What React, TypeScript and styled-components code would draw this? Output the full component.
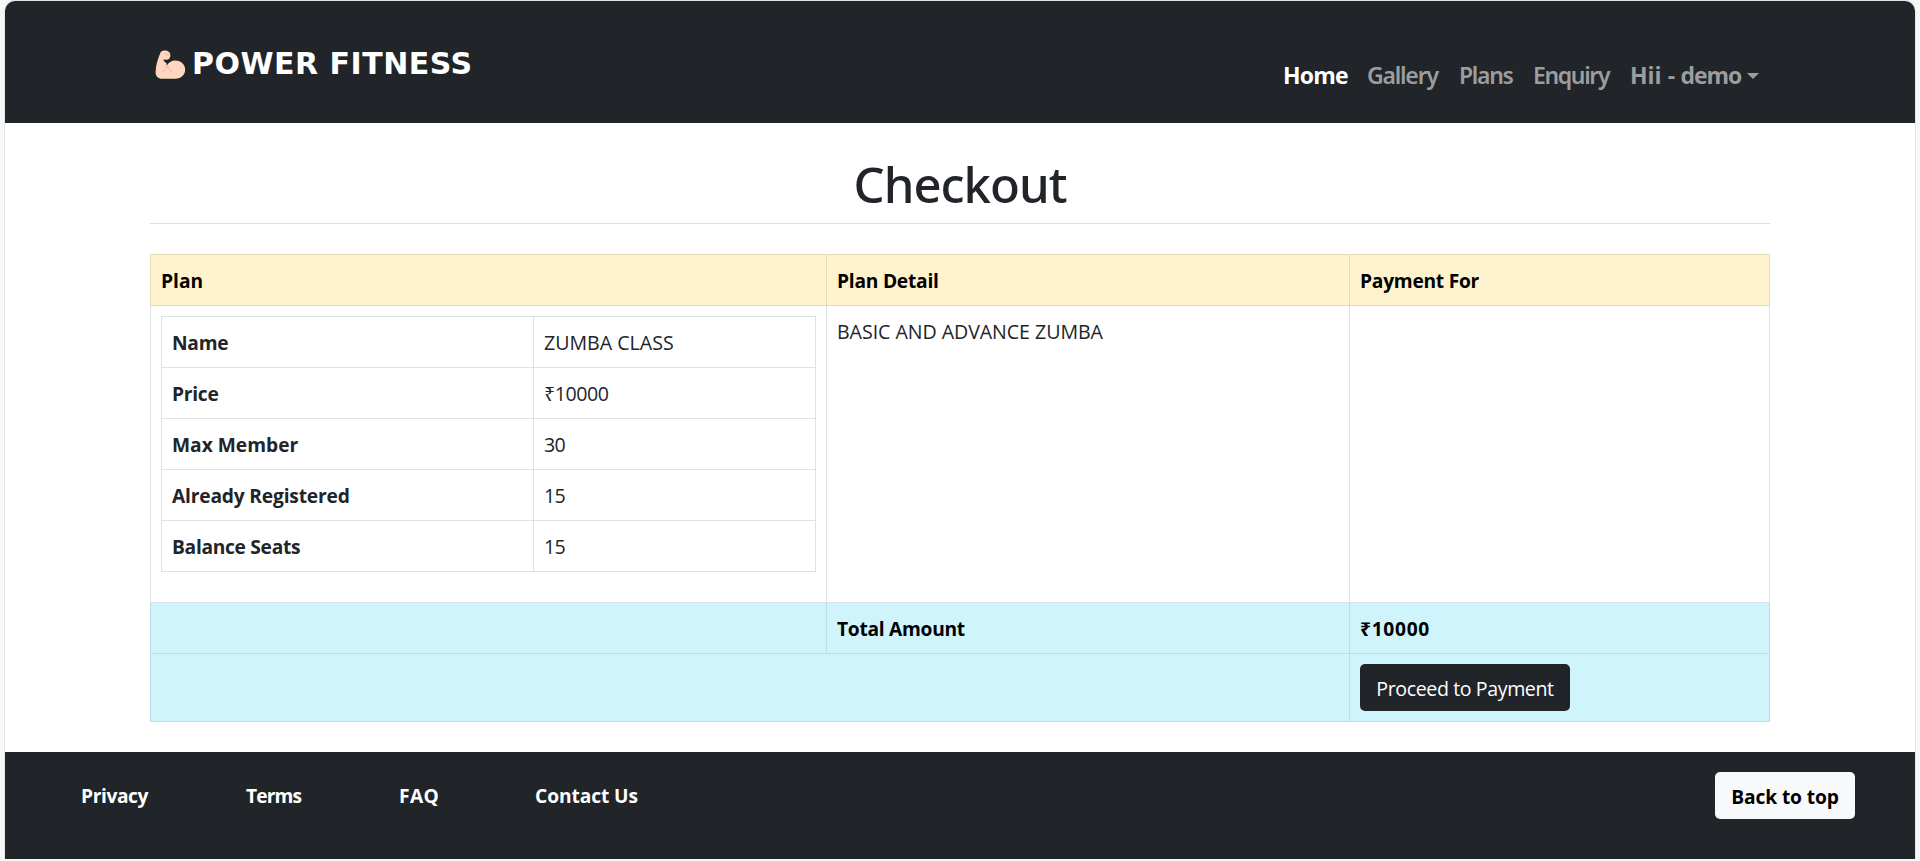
import React from 'react';
import styled, { createGlobalStyle, css } from 'styled-components';

const GlobalStyle = createGlobalStyle`
  * { box-sizing: border-box; }
  html, body { height: 100%; }
  body {
    margin: 0;
    background: #f7f7f8;
    color: #212529;
    font: 400 19.6px/30px "Open Sans", "Noto Sans", sans-serif;
    overflow: hidden;
  }
`;

const Page = styled.div`
  width: 1912px;
  height: 859px;
  margin: 0 4px;
  border: 1px solid #e4e5e6;
  border-bottom: 0;
  border-radius: 11px 11px 0 0;
  background: #fff;
  overflow: hidden;
  display: flex;
  flex-direction: column;
`;

const Header = styled.header`
  height: 122px;
  flex: none;
  background: #212529;
  padding: 0 145px 0 150px;
  display: flex;
  justify-content: space-between;
`;

const Brand = styled.a`
  display: flex;
  align-items: flex-start;
  gap: 6px;
  padding-top: 49px;
  color: #fff;
  svg { display: block; }
`;

const BrandName = styled.span`
  font: 700 30px/30px "DejaVu Sans", sans-serif;
  letter-spacing: 0.5px;
  margin-top: -1px;
`;

const Nav = styled.nav`
  display: flex;
  padding: 56px 11px 0 0;
`;

const NavLink = styled.a<{ $width: number; $track: number; $active?: boolean; $bold?: boolean }>`
  width: ${p => p.$width}px;
  white-space: nowrap;
  font: ${p => (p.$bold ? 700 : 600)} 23px/36px "Noto Sans", sans-serif;
  letter-spacing: ${p => p.$track}px;
  color: ${p => (p.$active ? '#fff' : '#9b9d9f')};
  ${p => p.$bold && css`font-family: "Open Sans", sans-serif;`}
`;

const UserToggle = styled(NavLink)`
  display: flex;
`;

const UserPart = styled.span<{ $width: number; $track?: number }>`
  width: ${p => p.$width}px;
  letter-spacing: ${p => p.$track ?? 0}px;
`;

const Caret = styled.span`
  align-self: flex-start;
  margin-top: 16px;
  border: 6px solid transparent;
  border-top-color: currentColor;
  border-bottom: 0;
`;

const Main = styled.main`
  flex: 1;
  padding: 0 145px;
`;

const Title = styled.h1`
  margin: 0;
  height: 101px;
  padding-top: 31px;
  border-bottom: 1px solid #dedfe0;
  text-align: center;
  font: 500 49px/60px "Noto Sans", sans-serif;
  letter-spacing: -1px;
`;

type Tone = 'plain' | 'warning' | 'info';

const tones: Record<Tone, { bg: string; line: string; ink: string }> = {
  plain: { bg: '#fff', line: '#dee2e6', ink: '#212529' },
  warning: { bg: '#fff3cd', line: '#e6dbb9', ink: '#000' },
  info: { bg: '#cff4fc', line: '#badce3', ink: '#000' },
};

const Table = styled.table`
  width: 100%;
  table-layout: fixed;
  border-collapse: collapse;
`;

const PlanTable = styled(Table)`
  margin-top: 30px;
  width: 1620px;
`;

const DetailTable = styled(Table)`
  margin-bottom: 20px;
`;

const Col = styled.col<{ $width: number }>`
  width: ${p => p.$width}px;
`;

const Row = styled.tr<{ $tone?: Tone }>`
  > td, > th {
    background: ${p => tones[p.$tone ?? 'plain'].bg};
    border: 1px solid ${p => tones[p.$tone ?? 'plain'].line};
    color: ${p => tones[p.$tone ?? 'plain'].ink};
  }
`;

const Cell = styled.td<{ $track?: number; $block?: boolean }>`
  height: 51px;
  padding: ${p => (p.$block ? '10px' : '11px 10px 9px')};
  vertical-align: top;
  text-align: left;
  letter-spacing: ${p => p.$track ?? 0}px;
`;

const HeadCell = styled(Cell).attrs({ as: 'th' })`
  font-weight: 700;
  font-size: 19.2px;
`;

const Button = styled.button<{ $light?: boolean; $width: number; $track: number }>`
  display: block;
  width: ${p => p.$width}px;
  height: 47px;
  padding: 2px 0 0;
  border: 0;
  border-radius: 5px;
  white-space: nowrap;
  font: ${p => (p.$light ? '700 19.2px' : '400 19.6px')}/30px "Open Sans", sans-serif;
  letter-spacing: ${p => p.$track}px;
  background: ${p => (p.$light ? '#f8f9fa' : '#212529')};
  color: ${p => (p.$light ? '#000' : '#fff')};
`;

const Footer = styled.footer`
  height: 107px;
  flex: none;
  background: #212529;
  padding: 20px 60px 0 75px;
  display: flex;
  justify-content: space-between;
`;

const FooterLinks = styled.div`
  display: flex;
  padding: 9px 0 0 1px;
`;

const FooterLink = styled.a<{ $width: number; $track?: number }>`
  width: ${p => p.$width}px;
  color: #fff;
  font-weight: 700;
  font-size: 19.2px;
  letter-spacing: ${p => p.$track ?? 0}px;
`;

const Biceps = () => (
  <svg width="31" height="30" viewBox="0 0 31 30">
    <path
      d="M5.3 3.1C6.2 1.3 7.6.6 9.6.6c3.4 0 5.8 1.7 5.8 4.8 0 2.6-1.8 4.4-4.4 4.4L8.3 9.5c.7 1.8 1.7 3 3.2 3.7l.2 2.5c1.7-3.3 5-5.3 8.8-5.3 5.4 0 9.7 4 9.7 9.2S26 28.8 20.4 28.8H7.2C3 28.8.6 26 .6 22.2c0-6.5 2.4-13.4 4.7-19.1Z"
      fill="#ffd6c0"
    />
    <path d="M10 3.4c.4 1.3 1.8 1.9 3.4 1.4M12.2 16.2l4.5 6M12.2 16.2 8 22" fill="none" stroke="#e8b496" strokeWidth="1" strokeLinecap="round" />
  </svg>
);

const details = [
  { label: 'Name', value: 'ZUMBA CLASS', track: -0.25, valueTrack: 0 },
  { label: 'Price', value: '₹10000', track: -0.25, valueTrack: -0.45 },
  { label: 'Max Member', value: '30', track: 0, valueTrack: -0.6 },
  { label: 'Already Registered', value: '15', track: -0.18, valueTrack: -0.6 },
  { label: 'Balance Seats', value: '15', track: -0.3, valueTrack: -0.6 },
];

export default function App() {
  return (
    <>
      <GlobalStyle />
      <Page>
        <Header>
          <Brand>
            <Biceps />
            <BrandName>POWER FITNESS</BrandName>
          </Brand>
          <Nav>
            <NavLink $width={84} $track={-0.8} $active $bold>Home</NavLink>
            <NavLink $width={92} $track={-1.2}>Gallery</NavLink>
            <NavLink $width={74} $track={-1.3}>Plans</NavLink>
            <NavLink $width={97} $track={-1.35}>Enquiry</NavLink>
            <UserToggle $width={129} $track={0} $bold>
              <UserPart $width={38}>Hii</UserPart>
              <UserPart $width={13}>-</UserPart>
              <UserPart $width={67} $track={-1.1}>demo</UserPart>
              <Caret />
            </UserToggle>
          </Nav>
        </Header>
        <Main>
          <Title>Checkout</Title>
          <PlanTable>
            <colgroup>
              <Col $width={676} />
              <Col $width={523} />
              <Col $width={420} />
            </colgroup>
            <tbody>
              <Row $tone="warning">
                <HeadCell>Plan</HeadCell>
                <HeadCell $track={-0.24}>Plan Detail</HeadCell>
                <HeadCell $track={-0.25}>Payment For</HeadCell>
              </Row>
              <Row>
                <Cell $block>
                  <DetailTable>
                    <colgroup>
                      <Col $width={372} />
                      <Col $width={282} />
                    </colgroup>
                    <tbody>
                      {details.map(d => (
                        <Row key={d.label}>
                          <HeadCell $track={d.track}>{d.label}</HeadCell>
                          <Cell $track={d.valueTrack}>{d.value}</Cell>
                        </Row>
                      ))}
                    </tbody>
                  </DetailTable>
                </Cell>
                <Cell $track={-0.05}>BASIC AND ADVANCE ZUMBA</Cell>
                <Cell />
              </Row>
              <Row $tone="info">
                <Cell />
                <HeadCell $track={-0.28}>Total Amount</HeadCell>
                <HeadCell $track={0.7}>₹10000</HeadCell>
              </Row>
              <Row $tone="info">
                <Cell colSpan={2} />
                <Cell $block>
                  <Button $width={210} $track={-0.4}>Proceed to Payment</Button>
                </Cell>
              </Row>
            </tbody>
          </PlanTable>
        </Main>
        <Footer>
          <FooterLinks>
            <FooterLink $width={165} $track={-0.4}>Privacy</FooterLink>
            <FooterLink $width={153} $track={-0.9}>Terms</FooterLink>
            <FooterLink $width={136} $track={0.4}>FAQ</FooterLink>
            <FooterLink $width={120} $track={-0.1}>Contact Us</FooterLink>
          </FooterLinks>
          <Button $light $width={140} $track={-0.12}>Back to top</Button>
        </Footer>
      </Page>
    </>
  );
}
